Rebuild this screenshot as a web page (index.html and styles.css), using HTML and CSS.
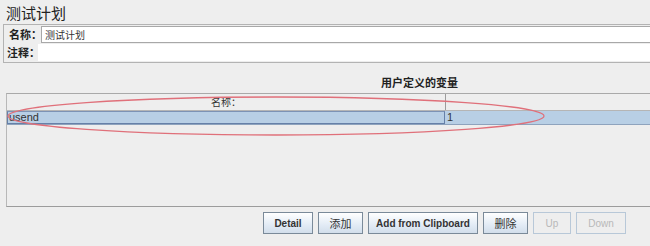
FILE: index.html
```html
<!DOCTYPE html>
<html lang="zh-CN">
<head>
    <meta charset="UTF-8">
    <title>测试计划</title>
    <link rel="stylesheet" href="styles.css">
</head>
<body>
    <div class="page">
        <h1 class="title">测试计划</h1>

        <div class="info">
            <div class="field">
                <span class="label">名称：</span>
                <span class="input boxed">测试计划</span>
            </div>
            <div class="field">
                <span class="label short">注释：</span>
                <span class="input"></span>
            </div>
        </div>

        <div class="vars">
            <div class="vars-title">用户定义的变量</div>
            <div class="table">
                <div class="row head">
                    <div class="cell">名称：</div>
                    <div class="cell"></div>
                </div>
                <div class="row selected">
                    <div class="cell focus">usend</div>
                    <div class="cell">1</div>
                </div>
            </div>
        </div>

        <div class="buttons">
            <button class="btn w50">Detail</button>
            <button class="btn w45 cjk">添加</button>
            <button class="btn w110">Add from Clipboard</button>
            <button class="btn w45 cjk">删除</button>
            <button class="btn w38" disabled>Up</button>
            <button class="btn w50" disabled>Down</button>
        </div>

        <!-- red marker drawn over the table row -->
        <svg class="mark" width="560" height="50" viewBox="0 0 560 50">
            <ellipse cx="276" cy="22" rx="268" ry="19" fill="none" stroke="#e0707a" stroke-width="1.3"/>
        </svg>
    </div>
</body>
</html>
```

FILE: styles.css
```css
html, body {
    margin: 0;
    padding: 0;
    background-color: #eeeeee;
    overflow: hidden;
}
body {
    font-family: 'Liberation Sans', Arial, 'Noto Sans CJK SC', sans-serif;
    font-size: 11px;
    color: #333;
}
.page {
    position: relative;
    width: 650px;
    height: 246px;
}
.title {
    margin: 0;
    padding: 3px 0 0 6px;
    height: 21px;
    font-size: 15px;
    line-height: 19px;
    font-weight: normal;
    color: #222;
    font-family: 'Noto Sans CJK SC', sans-serif;
}
.info {
    margin-left: 3px;
    border: 1px solid #b3b3b3;
    border-right: none;
    padding: 1px 0 1px 1px;
    height: 35px;
}
.field {
    display: flex;
    height: 17px;
    align-items: stretch;
}
.field + .field {
    margin-top: 1px;
}
.label {
    width: 36px;
    padding-left: 4px;
    box-sizing: border-box;
    white-space: nowrap;
    font-family: 'Noto Sans CJK SC', sans-serif;
    font-weight: bold;
    font-size: 11px;
    line-height: 17px;
    color: #222;
}
.label.short {
    width: 33px;
    padding-left: 2px;
}
.input {
    flex: 1;
    background-color: #fff;
    font-family: 'Noto Sans CJK SC', sans-serif;
    font-size: 10px;
    line-height: 15px;
    padding-left: 3px;
    color: #333;
}
.boxed {
    border: 1px solid #a8a8a8;
    border-right: none;
}
.vars {
    margin-top: 12px;
}
.vars-title {
    padding-left: 381px;
    height: 18px;
    font-family: 'Noto Sans CJK SC', sans-serif;
    font-weight: bold;
    font-size: 11px;
    line-height: 14px;
    color: #222;
}
.table {
    margin-left: 6px;
    height: 112px;
    border: 1px solid #b8b8b8;
    border-top-color: #a9a9a9;
    border-bottom-color: #9c9c9c;
    border-right: none;
}
.row {
    display: flex;
}
.cell {
    width: 438px;
    box-sizing: border-box;
}
.cell + .cell {
    flex: 1;
}
.head {
    height: 16px;
    border-bottom: 1px solid #b5b5b5;
}
.head .cell {
    text-align: center;
    font-family: 'Noto Sans CJK SC', sans-serif;
    font-size: 10px;
    line-height: 15px;
    color: #333;
}
.head .cell + .cell {
    border-left: 1px solid #9c9c9c;
}
.selected {
    height: 13px;
    background-color: #b8cfe5;
    border-bottom: 1px solid #8ea3bd;
}
.selected .cell {
    font-size: 11px;
    line-height: 12px;
    padding-left: 2px;
    color: #333;
}
.selected .focus {
    border: 1px solid #6680a8;
    border-top-color: #7d93b5;
    padding-left: 1px;
    line-height: 11px;
}
.buttons {
    display: flex;
    gap: 5px;
    margin: 5px 0 0 263px;
}
.btn {
    height: 22px;
    padding: 0;
    border: 1px solid #7a8a99;
    background: linear-gradient(#ffffff, #e2ebf5 60%, #d2deeb);
    font-family: 'Liberation Sans', Arial, 'Noto Sans CJK SC', sans-serif;
    font-weight: bold;
    font-size: 10px;
    color: #333;
    text-align: center;
}
.btn.cjk {
    font-family: 'Noto Sans CJK SC', sans-serif;
    font-weight: normal;
    font-size: 11px;
}
.btn:disabled {
    background: #eeeeee;
    border-color: #b8c8d8;
    color: #b8b8b8;
    font-weight: normal;
}
.w38 { width: 38px; }
.w45 { width: 45px; }
.w50 { width: 50px; }
.w110 { width: 110px; }
.mark {
    position: absolute;
    left: 0;
    top: 94px;
}
```
